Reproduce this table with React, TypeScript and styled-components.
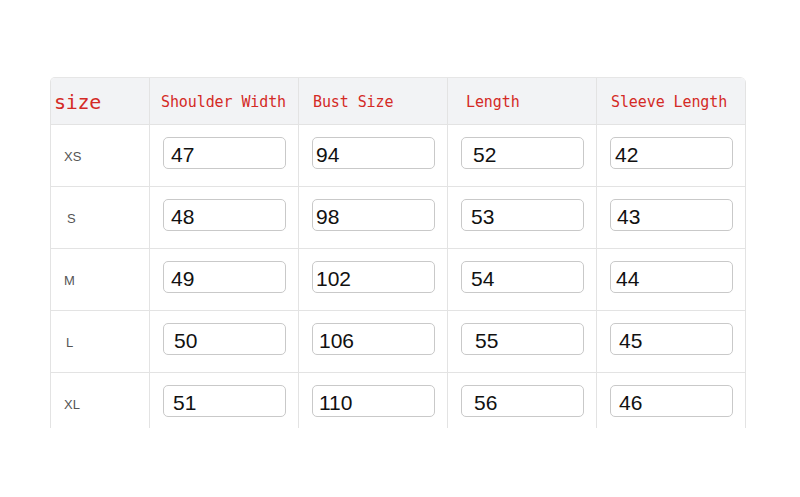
import React from "react";
import styled, { createGlobalStyle } from "styled-components";

const Global = createGlobalStyle`
  html, body { margin: 0; padding: 0; background: #ffffff; }
  body { width: 800px; height: 497px; overflow: hidden; }
`;

const Page = styled.div`
  padding: 77px 0 0 50px;
  height: 497px;
  box-sizing: border-box;
`;

const Clip = styled.div`
  width: 696px;
  height: 351px;
  overflow: hidden;
`;

const Table = styled.div`
  display: grid;
  grid-template-columns: 99px repeat(4, 149px);
  grid-template-rows: 47px repeat(5, 62px);
  border-left: 1px solid #e3e3e3;
  border-top: 1px solid #e6e6e6;
  border-radius: 5px 6px 0 0;
  box-sizing: border-box;
  width: 696px;
  overflow: hidden;
`;

const HeadCell = styled.div<{ $indent: number }>`
  background: #f2f3f5;
  display: flex;
  align-items: center;
  padding-left: ${(p) => p.$indent}px;
  padding-top: 2px;
  border-right: 1px solid #e3e3e3;
  border-bottom: 1px solid #e3e3e3;
  color: #d42a25;
  font-family: "DejaVu Sans Mono", "Liberation Mono", monospace;
  font-size: 15px;
  letter-spacing: -0.1px;
  white-space: nowrap;
  box-sizing: border-box;
`;

const SizeHead = styled(HeadCell)`
  font-size: 20px;
  letter-spacing: -0.3px;
`;

const LabelCell = styled.div<{ $indent: number }>`
  display: flex;
  align-items: center;
  padding-left: ${(p) => p.$indent}px;
  padding-top: 1px;
  border-right: 1px solid #e3e3e3;
  border-bottom: 1px solid #e3e3e3;
  color: #555555;
  font-family: "Liberation Sans", Arial, sans-serif;
  font-size: 13px;
  box-sizing: border-box;
`;

const ValueCell = styled.div`
  padding: 12px 0 0 13px;
  border-right: 1px solid #e3e3e3;
  border-bottom: 1px solid #e3e3e3;
  box-sizing: border-box;
`;

const Box = styled.div<{ $indent: number }>`
  width: 123px;
  height: 32px;
  box-sizing: border-box;
  border: 1px solid #c9c9c9;
  border-radius: 5px;
  display: flex;
  align-items: center;
  padding: 3px 0 0 ${(p) => p.$indent - 1}px;
  font-family: "Liberation Sans", Arial, sans-serif;
  font-size: 21px;
  color: #111111;
`;

const headers: { text: string; indent: number }[] = [
  { text: "Shoulder Width", indent: 11 },
  { text: "Bust Size", indent: 14 },
  { text: "Length", indent: 18 },
  { text: "Sleeve Length", indent: 14 },
];

const rows: { label: string; labelIndent: number; values: [string, number][] }[] = [
  { label: "XS", labelIndent: 13, values: [["47", 8], ["94", 4], ["52", 12], ["42", 5]] },
  { label: "S", labelIndent: 16, values: [["48", 8], ["98", 4], ["53", 10], ["43", 7]] },
  { label: "M", labelIndent: 13, values: [["49", 8], ["102", 4], ["54", 10], ["44", 6]] },
  { label: "L", labelIndent: 15, values: [["50", 11], ["106", 7], ["55", 14], ["45", 9]] },
  { label: "XL", labelIndent: 13, values: [["51", 10], ["110", 7], ["56", 13], ["46", 9]] },
];

export default function App() {
  return (
    <>
      <Global />
      <Page>
        <Clip>
          <Table>
            <SizeHead $indent={3}>size</SizeHead>
            {headers.map((h) => (
              <HeadCell key={h.text} $indent={h.indent}>
                {h.text}
              </HeadCell>
            ))}
            {rows.map((r) => (
              <React.Fragment key={r.label}>
                <LabelCell $indent={r.labelIndent}>{r.label}</LabelCell>
                {r.values.map(([v, ind], i) => (
                  <ValueCell key={i}>
                    <Box $indent={ind}>{v}</Box>
                  </ValueCell>
                ))}
              </React.Fragment>
            ))}
          </Table>
        </Clip>
      </Page>
    </>
  );
}
